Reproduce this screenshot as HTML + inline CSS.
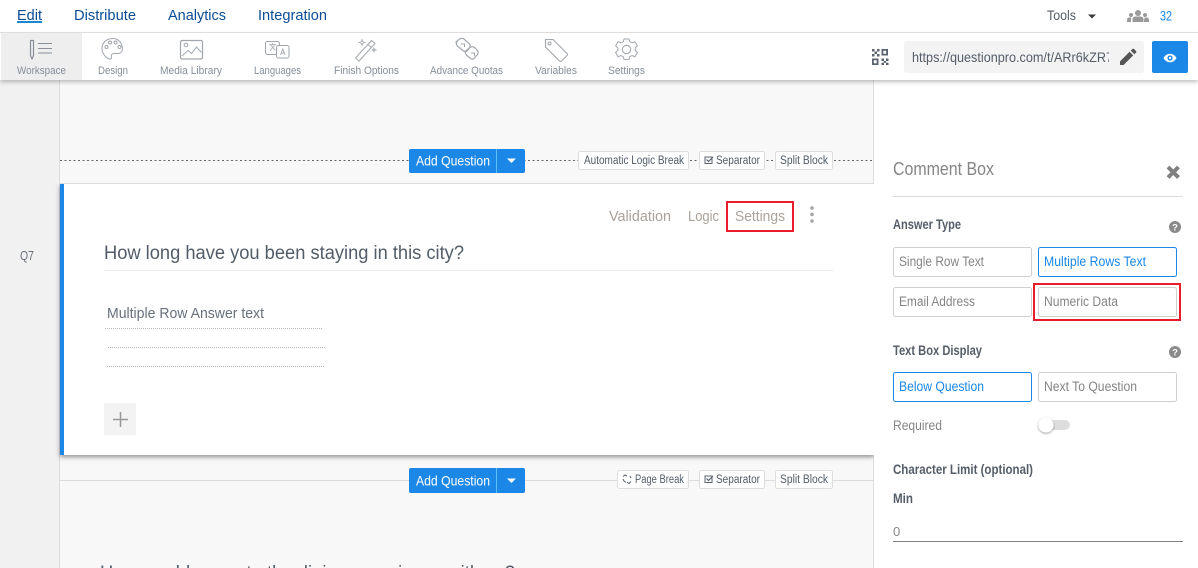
<!DOCTYPE html>
<html lang="en">
<head>
<meta charset="utf-8">
<title>Survey editor</title>
<style>
html,body{margin:0;padding:0;background:#fff;width:1198px;height:568px;overflow:hidden}
svg{display:block;font-family:"Liberation Sans",sans-serif}
.nav{font-size:14.5px;fill:#0b4c95}
.tb{font-size:11px;fill:#858e9a}
.ic{fill:none;stroke:#a2a7ae;stroke-width:1}
.chip{fill:#fff;stroke:#ddd;stroke-width:1}
.cht{font-size:11.5px;fill:#525b68}
.btn{font-size:13.5px;fill:#858585}
.sel{font-size:13.5px;fill:#1b87e6}
.bx{fill:#fff;stroke:#cfcfcf;stroke-width:1}
.bxs{fill:#fff;stroke:#1b87e6;stroke-width:1}
.lb{font-size:13.5px;font-weight:bold;fill:#555d68}
.aq{font-size:14px;fill:#fff}
.lnk{font-size:15px;fill:#a9a29b}
</style>
</head>
<body>
<svg width="1198" height="568" viewBox="0 0 1198 568" xmlns="http://www.w3.org/2000/svg">
<defs>
<filter id="s1" x="-5%" y="-5%" width="110%" height="115%"><feDropShadow dx="0" dy="2" stdDeviation="2.500" flood-color="#000" flood-opacity=".42"/></filter>
<filter id="s2" x="-5%" y="-50%" width="110%" height="220%"><feDropShadow dx="0" dy="2" stdDeviation="2" flood-color="#000" flood-opacity=".25"/></filter>
<filter id="s3" x="-50%" y="-50%" width="200%" height="200%"><feDropShadow dx="0" dy="1" stdDeviation="1.200" flood-color="#000" flood-opacity=".4"/></filter>
<clipPath id="cardclip"><rect x="40" y="184" width="834" height="300"/></clipPath>
</defs>

<!-- page backgrounds -->
<rect width="1198" height="568" fill="#fff"/>
<rect x="0" y="80" width="59" height="488" fill="#f1f1f1"/>
<rect x="59" y="80" width="1" height="488" fill="#dcdcdc"/>
<rect x="60" y="80" width="813" height="488" fill="#f8f8f8"/>
<rect x="873" y="80" width="1" height="488" fill="#dedede"/>

<!-- block separator 1 -->
<line x1="60" y1="160.500" x2="873" y2="160.500" stroke="#666" stroke-width="1" stroke-dasharray="2 2.500"/>
<rect x="60" y="183" width="814" height="1" fill="#ddd"/>

<rect x="409" y="149" width="116" height="24" rx="2" fill="#1b87e6"/>
<rect x="496" y="149" width="1" height="24" fill="#5cc0ff"/>
<text class="aq" x="416" y="165.500" textLength="74" lengthAdjust="spacingAndGlyphs">Add Question</text>
<path d="M507 158.500h9l-4.500 4.500z" fill="#fff"/>

<rect class="chip" x="578.500" y="151.500" width="110" height="18" rx="2"/>
<text class="cht" x="584" y="164" textLength="100" lengthAdjust="spacingAndGlyphs">Automatic Logic Break</text>
<rect class="chip" x="699.500" y="151.500" width="65" height="18" rx="2"/>
<path d="M705 157h7v6.500h-7z" fill="none" stroke="#5a6370" stroke-width="1"/><path d="M706.500 159.500l2 2 4.500-4.500" fill="none" stroke="#5a6370" stroke-width="1.200"/>
<text class="cht" x="716" y="164" textLength="44" lengthAdjust="spacingAndGlyphs">Separator</text>
<rect class="chip" x="775.500" y="151.500" width="57" height="18" rx="2"/>
<text class="cht" x="780" y="164" textLength="48" lengthAdjust="spacingAndGlyphs">Split Block</text>

<!-- question card -->
<g clip-path="url(#cardclip)"><rect x="60" y="184" width="814" height="271" fill="#fff" filter="url(#s1)"/></g>
<rect x="60" y="184" width="4" height="271" fill="#1b87e6"/>
<text x="20" y="260" font-size="13" fill="#666e78" textLength="14" lengthAdjust="spacingAndGlyphs">Q7</text>

<text class="lnk" x="609" y="221" textLength="62" lengthAdjust="spacingAndGlyphs">Validation</text>
<text class="lnk" x="688" y="221" textLength="31" lengthAdjust="spacingAndGlyphs">Logic</text>
<text class="lnk" x="735" y="221" textLength="50" lengthAdjust="spacingAndGlyphs">Settings</text>
<rect x="727" y="202" width="66" height="29" fill="none" stroke="#e81c2a" stroke-width="2"/>
<circle cx="812" cy="208" r="1.800" fill="#a5a5a5"/><circle cx="812" cy="214.500" r="1.800" fill="#a5a5a5"/><circle cx="812" cy="221" r="1.800" fill="#a5a5a5"/>

<text x="104" y="259" font-size="19" fill="#525c68" textLength="360" lengthAdjust="spacingAndGlyphs">How long have you been staying in this city?</text>
<rect x="104" y="270" width="729" height="1" fill="#ececec"/>
<text x="107" y="318" font-size="14.500" fill="#68707c" textLength="157" lengthAdjust="spacingAndGlyphs">Multiple Row Answer text</text>
<line x1="105" y1="328.500" x2="322" y2="328.500" stroke="#b5b5b5" stroke-dasharray="1 1"/>
<line x1="108" y1="347.500" x2="325" y2="347.500" stroke="#b5b5b5" stroke-dasharray="1 1"/>
<line x1="107" y1="366.500" x2="324" y2="366.500" stroke="#b5b5b5" stroke-dasharray="1 1"/>
<rect x="104" y="403" width="32" height="32" rx="1" fill="#f3f3f3"/>
<path d="M113 419.500h15M120.500 412v15" stroke="#999" stroke-width="1.500" fill="none"/>

<!-- block separator 2 -->
<rect x="60" y="480" width="813" height="1" fill="#dcdcdc"/>
<rect x="409" y="468" width="116" height="25" rx="2" fill="#1b87e6"/>
<rect x="496" y="468" width="1" height="25" fill="#5cc0ff"/>
<text class="aq" x="416" y="485.500" textLength="74" lengthAdjust="spacingAndGlyphs">Add Question</text>
<path d="M507 478.500h9l-4.500 4.500z" fill="#fff"/>

<rect class="chip" x="617.500" y="470.500" width="71" height="18" rx="2"/>
<path d="M623 476.500l2-1.500 2 1M627 482l2 1.500 2-2M623 479l1 2 2 1.500M630 476l1 2" fill="none" stroke="#5a6370" stroke-width="1"/>
<text class="cht" x="635" y="483" textLength="49" lengthAdjust="spacingAndGlyphs">Page Break</text>
<rect class="chip" x="699.500" y="470.500" width="65" height="18" rx="2"/>
<path d="M705 476h7v6.500h-7z" fill="none" stroke="#5a6370" stroke-width="1"/><path d="M706.500 478.500l2 2 4.500-4.500" fill="none" stroke="#5a6370" stroke-width="1.200"/>
<text class="cht" x="716" y="483" textLength="44" lengthAdjust="spacingAndGlyphs">Separator</text>
<rect class="chip" x="775.500" y="470.500" width="57" height="18" rx="2"/>
<text class="cht" x="780" y="483" textLength="48" lengthAdjust="spacingAndGlyphs">Split Block</text>

<text x="100" y="579" font-size="19" fill="#525c68" textLength="415" lengthAdjust="spacingAndGlyphs">How would you rate the dining experience with us?</text>

<!-- right panel -->
<text x="893" y="175" font-size="18.500" fill="#858585" textLength="101" lengthAdjust="spacingAndGlyphs">Comment Box</text>
<path d="M1168 167l10.500 10.500M1178.500 167l-10.500 10.500" stroke="#808080" stroke-width="4" fill="none"/>
<rect x="893" y="196" width="290" height="1" fill="#ddd"/>

<text class="lb" x="893" y="229" textLength="68" lengthAdjust="spacingAndGlyphs">Answer Type</text>
<circle cx="1175" cy="227" r="6" fill="#8a8a8a"/>
<text x="1175" y="230.500" font-size="9.500" font-weight="bold" fill="#fff" text-anchor="middle">?</text>

<rect class="bx" x="893.500" y="247.500" width="138" height="29" rx="2"/>
<text class="btn" x="899" y="266" textLength="85" lengthAdjust="spacingAndGlyphs">Single Row Text</text>
<rect class="bxs" x="1038.500" y="247.500" width="138" height="29" rx="2"/>
<text class="sel" x="1044" y="266" textLength="102" lengthAdjust="spacingAndGlyphs">Multiple Rows Text</text>
<rect class="bx" x="893.500" y="287.500" width="138" height="29" rx="2"/>
<text class="btn" x="899" y="306" textLength="76" lengthAdjust="spacingAndGlyphs">Email Address</text>
<rect class="bx" x="1038.500" y="287.500" width="138" height="29" rx="2"/>
<text class="btn" x="1044" y="306" textLength="74" lengthAdjust="spacingAndGlyphs">Numeric Data</text>
<rect x="1034" y="284" width="146" height="36" fill="none" stroke="#e81c2a" stroke-width="2"/>

<text class="lb" x="893" y="355" textLength="89" lengthAdjust="spacingAndGlyphs">Text Box Display</text>
<circle cx="1175" cy="352" r="6" fill="#8a8a8a"/>
<text x="1175" y="355.500" font-size="9.500" font-weight="bold" fill="#fff" text-anchor="middle">?</text>

<rect class="bxs" x="893.500" y="372.500" width="138" height="29" rx="2"/>
<text class="sel" x="899" y="391" textLength="85" lengthAdjust="spacingAndGlyphs">Below Question</text>
<rect class="bx" x="1038.500" y="372.500" width="138" height="29" rx="2"/>
<text class="btn" x="1044" y="391" textLength="93" lengthAdjust="spacingAndGlyphs">Next To Question</text>

<text x="893" y="430" font-size="13.500" fill="#858585" textLength="49" lengthAdjust="spacingAndGlyphs">Required</text>
<rect x="1040" y="420" width="30" height="10" rx="5" fill="#ddd"/>
<circle cx="1046" cy="425" r="7.500" fill="#fff" filter="url(#s3)"/>

<text class="lb" x="893" y="474" textLength="140" lengthAdjust="spacingAndGlyphs">Character Limit (optional)</text>
<text class="lb" x="893" y="503" textLength="20" lengthAdjust="spacingAndGlyphs">Min</text>
<text x="893" y="536" font-size="13" fill="#858585">0</text>
<rect x="893" y="541" width="290" height="1" fill="#808080"/>

<!-- toolbar -->
<rect x="0" y="33" width="1198" height="47" fill="#fff" filter="url(#s2)"/>
<rect x="1" y="33" width="81" height="47" fill="#eee"/>
<rect x="0" y="32" width="1198" height="1" fill="#ddd"/>

<!-- top nav -->
<text class="nav" x="17" y="20" textLength="25" lengthAdjust="spacingAndGlyphs">Edit</text>
<rect x="17" y="21" width="25" height="2" fill="#1b87d0"/>
<text class="nav" x="74" y="20" textLength="62" lengthAdjust="spacingAndGlyphs">Distribute</text>
<text class="nav" x="168" y="20" textLength="58" lengthAdjust="spacingAndGlyphs">Analytics</text>
<text class="nav" x="258" y="20" textLength="69" lengthAdjust="spacingAndGlyphs">Integration</text>

<text x="1047" y="20" font-size="14" fill="#555d68" textLength="29" lengthAdjust="spacingAndGlyphs">Tools</text>
<path d="M1088 14.500h8l-4 4z" fill="#3a3a3a"/>
<g fill="#9a9a9a">
<circle cx="1138" cy="13" r="3"/><path d="M1132.500 22v-2.500q0-3 3-3h5q3 0 3 3v2.500z"/>
<circle cx="1131" cy="15" r="2"/><path d="M1127 22v-2q0-2.500 2.500-2.500h2q-.5 1-.5 2v2.500z"/>
<circle cx="1145" cy="15" r="2"/><path d="M1149 22v-2q0-2.500-2.500-2.500h-2q.5 1-.5 2v2.500z"/>
</g>
<text x="1160" y="20.500" font-size="14" fill="#1b87e6" textLength="12" lengthAdjust="spacingAndGlyphs">32</text>

<!-- toolbar icons -->
<g class="ic">
<path d="M30.500 40.500h3v15l-1.500 3.500-1.500-3.500z" stroke="#8a9099" stroke-width="1.200"/>
<path d="M38 43.500h14M38 48.500h14M38 53h14" stroke="#8a9099"/>
<!-- palette -->
<path d="M113 38.500c-6.500 0-11 4.300-11 10 0 5 4 9.800 7.500 10.500 2 .4 2.300-1 2-2.500-.4-1.700.3-3 2.300-3h3.700c3.500 0 5-2 5-4.500 0-6-4.500-10.500-9.500-10.500z"/>
<circle cx="106.500" cy="47" r="1.500"/><circle cx="110" cy="42.500" r="1.500"/><circle cx="115.500" cy="42.500" r="1.500"/><circle cx="119.500" cy="47" r="1.500"/>
<!-- media -->
<rect x="180.500" y="40.500" width="22" height="18.500" rx="1.500" stroke-width="1.200"/>
<circle cx="186" cy="45" r="1.800"/><path d="M182 56l6-5.500 3.500 3 5-6.500 5 5.500"/>
<!-- languages -->
<rect x="265.500" y="41.500" width="14" height="13" rx="2"/>
<rect x="276.500" y="45.500" width="12.500" height="12.500" rx="2" fill="#fff"/>
<path d="M269 44.500h7.500M272.500 43v2M270 51l4.500-6M270.500 45l5 5.500" stroke-width=".8"/>
<path d="M280.500 55l2.300-6 2.300 6M281.500 53h2.800" stroke-width=".9"/>
<!-- wand -->
<path d="M355.500 59l16-17.500 3.500 3-16 17.500z" transform="translate(0 -1)"/>
<path d="M368 44.500l3.500 3"/>
<path d="M362 39.500l.8 2.200 2.200.8-2.200.8-.8 2.200-.8-2.200-2.200-.8 2.200-.8zM374 48l.5 1.500 1.500.5-1.500.5-.5 1.500-.5-1.500-1.500-.5 1.500-.5z" stroke-width=".8"/>
<!-- chain -->
<path d="M456.500 41.500l3-2.500c1.500-1 3-1 4.500 0l5 4.500c1.500 1.500 1.500 3 .5 4.500l-2 2.500c-1 1.200-2.500 1.500-4 .5l-6-5c-1.500-1.500-1.500-3-.5-4.500z" stroke-width="1.200"/>
<path d="M467 50l3-2.500c1.500-1 3-1 4.500 0l2.500 2.500c1.500 1.500 1.500 3 .5 4.500l-3 3.500c-1 1.200-2.500 1.500-4 .5l-4-3.500c-1.500-1.500-1.500-3-.5-4.500z" stroke-width="1.200"/>
<path d="M461 44h3.500v3M471 53h3.500v3"/>
<!-- tag -->
<path d="M545.500 39.500h7.500l14 14c.7.7.7 1.500 0 2l-5.500 5.500c-.6.6-1.400.6-2 0l-14-14z" stroke-width="1.100"/>
<circle cx="549.500" cy="43.500" r="1.500"/>
<!-- gear -->
<path d="M624 39h5l.8 2.800 2.400 1 2.700-1.200 2.500 4.300-2.200 2v2.600l2.200 2-2.500 4.300-2.700-1.200-2.400 1-.8 2.800h-5l-.8-2.800-2.400-1-2.700 1.200-2.500-4.300 2.200-2v-2.600l-2.200-2 2.500-4.300 2.700 1.200 2.400-1z"/>
<circle cx="626.500" cy="49.500" r="4.200" stroke-width="1.100"/>
</g>

<text class="tb" x="17" y="74" textLength="49" lengthAdjust="spacingAndGlyphs">Workspace</text>
<text class="tb" x="98" y="74" textLength="30" lengthAdjust="spacingAndGlyphs">Design</text>
<text class="tb" x="160" y="74" textLength="62" lengthAdjust="spacingAndGlyphs">Media Library</text>
<text class="tb" x="254" y="74" textLength="47" lengthAdjust="spacingAndGlyphs">Languages</text>
<text class="tb" x="334" y="74" textLength="65" lengthAdjust="spacingAndGlyphs">Finish Options</text>
<text class="tb" x="430" y="74" textLength="73" lengthAdjust="spacingAndGlyphs">Advance Quotas</text>
<text class="tb" x="535" y="74" textLength="42" lengthAdjust="spacingAndGlyphs">Variables</text>
<text class="tb" x="608" y="74" textLength="37" lengthAdjust="spacingAndGlyphs">Settings</text>

<!-- QR -->
<g fill="#5a6370">
<path d="M872 49h2.500v2.500H872zM877 49h2.500v2.500H877zM874.500 51.500h2.500V54h-2.500zM872 54h2.500v2.500H872zM877 54h2.500v2.500H877z"/>
<path d="M881.500 49h6.500v6.500h-6.500zM883.300 50.800v2.900h2.900v-2.900z" fill-rule="evenodd"/>
<path d="M872 58.500h6.500V65H872zM873.800 60.300v2.900h2.900v-2.900z" fill-rule="evenodd"/>
<path d="M881.500 58.500h2.500V61h-2.500zM886 58.500h2.500V61H886zM883.700 61h2.500v1.700h-2.500zM881.500 62.700h2.500V65h-2.500zM886 62.700h2.500V65H886z"/>
</g>

<!-- URL box -->
<rect x="904" y="41" width="240" height="32" rx="3" fill="#f3f3f3"/>
<svg x="904" y="41" width="205" height="32" viewBox="0 0 205 32">
<text x="8" y="21" font-size="14" fill="#555d68" textLength="201" lengthAdjust="spacingAndGlyphs">https://questionpro.com/t/ARr6kZR7</text>
</svg>
<path d="M1120 65v-3.600l9.600-9.600 3.600 3.600-9.600 9.600zM1130.800 50.600l1.700-1.700c.4-.4 1-.4 1.400 0l2.200 2.200c.4.4.4 1 0 1.400l-1.700 1.700z" fill="#555"/>

<rect x="1152" y="41" width="36" height="32" rx="2" fill="#1b87e6"/>
<path d="M1163.500 58c1.600-2.900 3.900-4.300 6.500-4.300s4.900 1.400 6.500 4.300c-1.600 2.900-3.900 4.300-6.500 4.300s-4.900-1.400-6.500-4.300z" fill="#fff"/>
<circle cx="1170" cy="58" r="2.600" fill="#1b87e6"/><circle cx="1170" cy="58" r="1.200" fill="#fff"/>
</svg>
</body>
</html>
